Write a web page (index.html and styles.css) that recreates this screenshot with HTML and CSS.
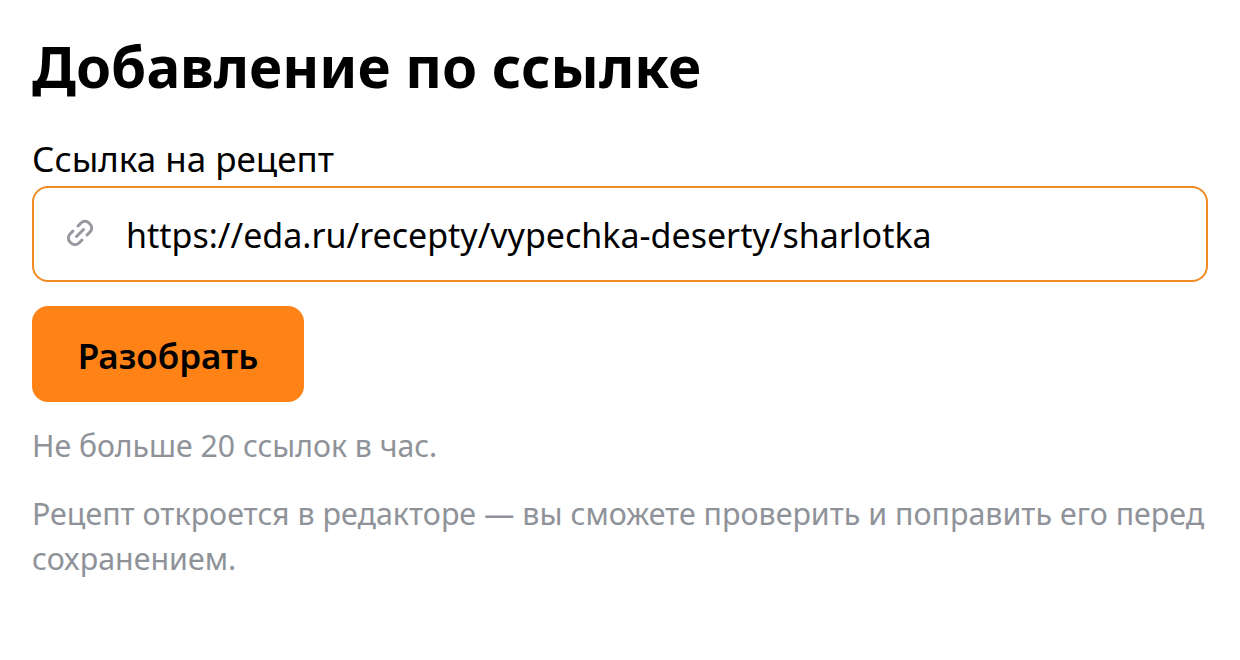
FILE: index.html
```html
<!DOCTYPE html>
<html>
    <head>
        <title>Добавление по ссылке</title>
        <link rel="stylesheet" href="styles.css">
    </head>
    <body>
        <div id="content">
            <h1 class="title">Добавление по ссылке</h1>
            <label class="field-label" for="url">Ссылка на рецепт</label>
            <div class="input-box">
                <svg class="link-icon" width="32" height="32" viewBox="0 0 32 32" fill="none" stroke="#95989e" stroke-width="3" stroke-linecap="round">
                    <path d="M14 9l3-3a5.6 5.6 0 0 1 8 0l1 1a5.6 5.6 0 0 1 0 8l-3 3"/>
                    <path d="M18 23l-3 3a5.6 5.6 0 0 1-8 0l-1-1a5.6 5.6 0 0 1 0-8l3-3"/>
                    <path d="M12.5 19.5l7-7"/>
                </svg>
                <input id="url" class="url-input" type="text" value="https://eda.ru/recepty/vypechka-deserty/sharlotka">
            </div>
            <button class="submit">Разобрать</button>
            <p class="hint">Не больше 20 ссылок в час.</p>
            <p class="hint hint-long">Рецепт откроется в редакторе — вы сможете проверить и поправить его перед сохранением.</p>
        </div>
    </body>
</html>
```

FILE: styles.css
```css
body {
    margin: 0;
    background: #ffffff;
    color: #000000;
    font-family: "Noto Sans", sans-serif;
}

#content {
    width: 1176px;
    padding: 32px 32px 0;
}

.title {
    margin: 0 0 36px;
    font-size: 56.6px;
    line-height: 68px;
    font-weight: 700;
}

.field-label {
    display: block;
    margin-bottom: 6px;
    padding-top: 1px;
    height: 43px;
    font-size: 35px;
    line-height: 44px;
    font-weight: 400;
}

.input-box {
    display: flex;
    align-items: center;
    gap: 30px;
    height: 96px;
    padding: 0 30px;
    box-sizing: border-box;
    border: 2px solid #f08a24;
    border-radius: 16px;
}

.link-icon {
    flex: none;
    margin-bottom: 2px;
}

.url-input {
    flex: 1;
    border: none;
    outline: none;
    padding: 2px 0 0;
    font-family: inherit;
    font-size: 34px;
    color: #000000;
}

.submit {
    display: block;
    width: 272px;
    height: 96px;
    margin: 24px 0 21px;
    padding: 2px 0 0;
    border: none;
    border-radius: 16px;
    background-color: #ff8216;
    color: #000000;
    font-family: inherit;
    font-size: 35px;
    font-weight: 600;
}

.hint {
    margin: 0 0 23px;
    font-size: 30.2px;
    line-height: 45px;
    color: #8f9399;
}

.hint-long {
    font-size: 30.4px;
}
```
